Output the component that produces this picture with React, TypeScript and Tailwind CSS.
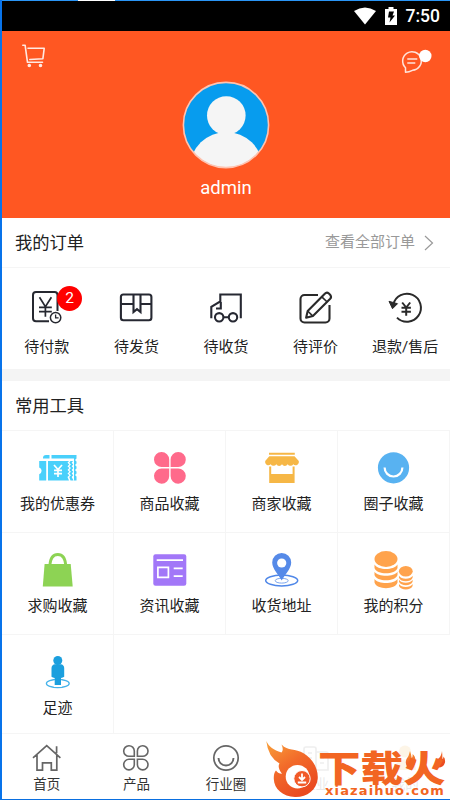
import React from 'react';

const PayIcon = () => (
  <svg viewBox="0 0 40 40" className="w-10 h-10" fill="none" stroke="#262830" strokeWidth="2">
    <path d="M22 34.2H9a3 3 0 0 1-3-3V8a3 3 0 0 1 3-3h18.500a3 3 0 0 1 3 3v16" />
    <path d="M12.500 10.200l5.900 9.500 6-9.500M18.400 19.700v10M12 20.400h12.800M12 24.700h12.800" strokeWidth="1.700" />
    <circle cx="28.600" cy="30.600" r="5.200" strokeWidth="1.500" />
    <path d="M28.600 27.500v3.300h3" strokeWidth="1.300" />
  </svg>
);

const BoxIcon = () => (
  <svg viewBox="0 0 40 40" className="w-10 h-10" fill="none" stroke="#262832" strokeWidth="2.100">
    <rect x="4.900" y="7.500" width="30.500" height="25.800" rx="2.500" />
    <path d="M5 17h12.500M24.500 17h11M17.500 7.500v17.500l3.500-2.800 3.500 2.800V7.500" />
  </svg>
);

const TruckIcon = () => (
  <svg viewBox="0 0 40 40" className="w-10 h-10" fill="none" stroke="#262832" strokeWidth="2.100">
    <path d="M5.300 31.200V19.800l9-5.500V7.500H34.800v23.700M14.800 15v6.500H10M17.500 30.300h5" />
    <circle cx="13.200" cy="30.300" r="4.200" />
    <circle cx="27" cy="30.300" r="4.200" />
  </svg>
);

const EditIcon = () => (
  <svg viewBox="0 0 40 40" className="w-10 h-10" fill="none" stroke="#2a2a2a" strokeWidth="2.100" strokeLinejoin="round">
    <path d="M22 8H8.500a4 4 0 0 0-4 4v19.500a4 4 0 0 0 4 4h21a4 4 0 0 0 4-4V18" />
    <path d="M28.800 6.800L11.700 24l-1.600 6.800 6.800-1.700L34.200 11.800a3 3 0 0 0 .3-3.600l-1.600-1.700a3 3 0 0 0-4.100.3z" />
    <path d="M25.800 9.800l5.400 5.200M11.700 24l5.200 5.100" strokeWidth="1.600" />
  </svg>
);

const RefundIcon = () => (
  <svg viewBox="0 0 40 40" className="w-10 h-10" fill="none" stroke="#2a2a2a" strokeWidth="2">
    <path d="M8.300 17.500A14 14 0 1 1 12 30.600" />
    <path d="M4 14.300l8.500 2.400-5 5z" fill="#2a2a2a" strokeWidth="1" />
    <path d="M17.200 15.500l4 5 4-5M21.200 20.500v8.200M16.500 20.800h9.400M16.500 24.700h9.400" />
  </svg>
);

const CouponIcon = () => (
  <svg viewBox="0 0 44 44" className="w-11 h-11" fill="#49d0fb">
    <path d="M7 12q0-3 3-3h3.500v3.500H7zM15.500 9H40.500v3.500l-1.500 1.500 1.500 1.500v2l-1.500 1.500 1.500 1.500v2l-1.500 1.500 1.500 1.500v2l-1.500 1.500 1.500 1.500v4H38V12.500H15.500z" />
    <path d="M3.200 15h7v19.600h-7v-6.400a3.600 3.600 0 0 0 0-6.800zM12 15h21l-1.500 1.700 1.800 1.800-1.800 1.800 1.800 1.800-1.800 1.800 1.800 1.800-1.800 1.800 1.800 1.800-1.800 1.800 1.500 3.500H12z" />
    <path d="M34.500 15H37l-1.300 1.700 1.500 1.800-1.500 1.800 1.500 1.800-1.500 1.800 1.500 1.800-1.500 1.800 1.500 1.800-1.500 1.800 1.800 3.500h-3l-1.200-3.500 1.600-1.800-1.600-1.800 1.600-1.800-1.600-1.800 1.600-1.800-1.600-1.800 1.600-1.800-1.600-1.800z" />
    <path d="M18 19l4 4.500 4-4.500M22 23.500V31M18 24.300h8M18 27.700h8" fill="none" stroke="#fff" strokeWidth="1.700" />
  </svg>
);

const CloverIcon = () => (
  <svg viewBox="0 0 44 44" className="w-11 h-11" fill="#ff6a8b">
    <path d="M21.200 21.100H14a7.600 7.600 0 1 1 7.200-7.500zM22.600 21.100h7.200a7.600 7.600 0 1 0-7.200-7.500zM21.200 22.500H14a7.600 7.600 0 1 0 7.200 7.500zM22.600 22.500h7.200a7.600 7.600 0 1 1-7.200 7.500z" />
  </svg>
);

const StoreIcon = () => (
  <svg viewBox="0 0 44 44" className="w-11 h-11" fill="#f6b746">
    <path d="M9 6.800h25.800v2H9zM9.300 10.300h25.200l4.300 4.800v1.700a3.200 3.200 0 0 1-5.500 1.500 3.300 3.300 0 0 1-5.600 0 3.300 3.300 0 0 1-5.700 0 3.300 3.300 0 0 1-5.700 0 3.300 3.300 0 0 1-5.600 0 3.200 3.200 0 0 1-5.500-1.500v-1.700z" />
    <path d="M9.200 20.500h2V28h21.400v-7.500h2V37H9.200z" />
  </svg>
);

const CircleIcon = () => (
  <svg viewBox="0 0 44 44" className="w-11 h-11">
    <circle cx="21.500" cy="21.800" r="15.600" fill="#58b2f1" />
    <path d="M12.600 21.500a8.900 9 0 0 0 17.800 0" fill="none" stroke="#fff" strokeWidth="2.200" />
  </svg>
);

const BagIcon = () => (
  <svg viewBox="0 0 44 44" className="w-11 h-11">
    <path d="M13.800 17.500c.5-7 3.500-11 8-11s7.500 4 8 11" fill="none" stroke="#8dd354" strokeWidth="2.800" />
    <path d="M8.600 16h26.100l2 22.500H6.800z" fill="#8dd354" />
  </svg>
);

const NewsIcon = () => (
  <svg viewBox="0 0 44 44" className="w-11 h-11">
    <rect x="5.300" y="6.300" width="33" height="31.500" rx="2.200" fill="#a277f8" />
    <path d="M8.700 12.100h26.300M25.700 20.400h9M25.700 28.200h9M9.900 19.400h10.500v10H9.900z" fill="none" stroke="#fff" strokeWidth="1.700" />
  </svg>
);

const PinIcon = () => (
  <svg viewBox="0 0 44 44" className="w-11 h-11">
    <ellipse cx="21.700" cy="32.500" rx="16" ry="5.400" fill="none" stroke="#4f87e8" strokeWidth="1.500" />
    <ellipse cx="21.700" cy="32.700" rx="6.500" ry="2.400" fill="none" stroke="#7ba6ef" strokeWidth="1" />
    <path d="M21.700 32.500c-2.500-5-9.500-11.500-9.500-18a9.500 9.500 0 0 1 19 0c0 6.500-7 13-9.500 18z" fill="#568ae8" />
    <circle cx="21.700" cy="15" r="4.600" fill="#fff" />
  </svg>
);

const CoinsIcon = () => (
  <svg viewBox="0 0 44 44" className="w-11 h-11" fill="#ffa34c">
    <ellipse cx="14" cy="11" rx="11.500" ry="7.900" />
    <path d="M2.500 16.500c3.500 6 19.500 6 23 0v3.500c-2 7-21 7-23 0zM2.500 23.800c3.500 5.300 19.500 5.300 23 0v3.200c-2 7-21 7-23 0zM2.500 31c3.500 5.300 19.500 5.300 23 0v3.500c-2 7.500-21 7.500-23 0z" />
    <ellipse cx="33.800" cy="23.200" rx="6.900" ry="5.300" />
    <path d="M27 27.700c2 4 11.600 4 13.600 0v2c-1.500 4.700-12 4.700-13.600 0zM27 31.800c2 4 11.600 4 13.600 0v2c-1.500 4.500-12 4.500-13.600 0zM27 36c2 4 11.600 4 13.600 0v2c-1.500 4.500-12 4.500-13.600 0z" />
  </svg>
);

const FootIcon = () => (
  <svg viewBox="0 0 44 44" className="w-11 h-11" fill="#1b9fde">
    <ellipse cx="21.800" cy="33.500" rx="11.400" ry="4" fill="none" stroke="#46b3ea" strokeWidth="1.300" />
    <path d="M17.800 30.500h8v6.500h-8z" fill="#fff" />
    <circle cx="21.800" cy="10.500" r="4.500" />
    <path d="M18.500 14.200h6.700q3 .8 3 4v8.500q-1.200 1-3.200 1.400v7h-6.300v-7q-2-.4-3.200-1.400v-8.500q0-3.200 3-4z" />
  </svg>
);

const HomeIcon = () => (
  <svg viewBox="0 0 32 32" className="w-8 h-8" fill="none" stroke="#666" strokeWidth="1.700">
    <path d="M2 15.800L15.700 3.700l13.700 12.100M25.600 4.300v7M6 13v15.200h5.500v-7.300h8.800v7.300h5.500V13" />
  </svg>
);

const ProductIcon = () => (
  <svg viewBox="0 0 32 32" className="w-8 h-8" fill="none" stroke="#666" strokeWidth="1.600">
    <path d="M14.300 14.300H9.200a5.300 5.300 0 1 1 5.100-5.400zM17.400 14.300h5.100a5.300 5.300 0 1 0-5.100-5.400zM14.300 17.300H9.200a5.300 5.300 0 1 0 5.100 5.400zM17.400 17.300h5.100a5.300 5.300 0 1 1-5.100 5.400z" />
  </svg>
);

const SmileIcon = () => (
  <svg viewBox="0 0 32 32" className="w-8 h-8" fill="none" stroke="#666" strokeWidth="1.700">
    <circle cx="16" cy="16" r="12.200" />
    <path d="M8.500 16a7.500 7.500 0 0 0 15 0" strokeWidth="1.900" />
  </svg>
);

const CompanyIcon = () => (
  <svg viewBox="0 0 32 32" className="w-8 h-8" fill="none" stroke="#666" strokeWidth="1.700">
    <path d="M4 28V7a2 2 0 0 1 2-2h8a2 2 0 0 1 2 2v21zM16 10h10a2 2 0 0 1 2 2v16H16M8 11h4M8 16h4M8 21h4M20 16h4M20 21h4" />
  </svg>
);

const UserIcon = () => (
  <svg viewBox="0 0 32 32" className="w-8 h-8" fill="#f5a623">
    <circle cx="16" cy="9.500" r="6" />
    <path d="M5 28a11 10.500 0 0 1 22 0z" />
  </svg>
);

const orders = [
  { name: '待付款', icon: <PayIcon />, count: 2 },
  { name: '待发货', icon: <BoxIcon /> },
  { name: '待收货', icon: <TruckIcon /> },
  { name: '待评价', icon: <EditIcon /> },
  { name: '退款/售后', icon: <RefundIcon /> },
];

const tools = [
  { name: '我的优惠券', icon: <CouponIcon /> },
  { name: '商品收藏', icon: <CloverIcon /> },
  { name: '商家收藏', icon: <StoreIcon /> },
  { name: '圈子收藏', icon: <CircleIcon /> },
  { name: '求购收藏', icon: <BagIcon /> },
  { name: '资讯收藏', icon: <NewsIcon /> },
  { name: '收货地址', icon: <PinIcon /> },
  { name: '我的积分', icon: <CoinsIcon /> },
  { name: '足迹', icon: <FootIcon /> },
];

const tabs = [
  { name: '首页', icon: <HomeIcon /> },
  { name: '产品', icon: <ProductIcon /> },
  { name: '行业圈', icon: <SmileIcon /> },
  { name: '企业', icon: <CompanyIcon />, faded: true },
  { name: '我的', icon: <UserIcon />, faded: true },
];

const StatusBar = () => (
  <div className="h-[30px] shrink-0 bg-black flex items-center justify-end pr-[10px] text-white">
    <svg viewBox="0 0 22 18" className="w-[22px] h-[18px] mr-[9px]" fill="#fff">
      <path d="M0 4Q11-3 22 4L11 17.500z" />
    </svg>
    <svg viewBox="0 0 12 18" className="w-3 h-[18px] mr-[9px]">
      <path d="M0 2h3.500V0h5v2H12v16H0z" fill="#fff" />
      <path d="M4 4.500h5L7.500 8.500H10L4.500 15.500l1-5H3z" fill="#000" />
    </svg>
    <span className="text-[17.500px] leading-[30px] font-medium">7:50</span>
  </div>
);

const Profile = () => (
  <div className="h-[187px] shrink-0 bg-[#ff5722] relative flex flex-col items-center pt-[50px]">
    <svg viewBox="0 0 24 24" className="absolute left-5 top-[13px] w-6 h-6" fill="none" stroke="#ffe9e2" strokeWidth="1.600" strokeLinejoin="round" strokeLinecap="round">
      <path d="M.8 1.200h2.300L5.500 18.300h15M6 4.300h16.200l-1.300 10.400L7.800 15.500" />
      <circle cx="7.300" cy="21.500" r="1" fill="#fff" />
      <circle cx="18.500" cy="21.500" r="1" fill="#fff" />
    </svg>
    <svg viewBox="0 0 32 26" className="absolute left-[399px] top-[17px] w-8 h-[26px]" fill="none" stroke="#ffe4db" strokeWidth="1.500">
      <path d="M4.500 19.700A9.300 9.300 0 1 1 11.500 22.300Q8 24 4.500 24.300z" strokeLinejoin="round" />
      <path d="M6.300 11h10M6.300 15h8" />
      <circle cx="24.300" cy="8" r="6.200" fill="#fff" stroke="none" />
    </svg>
    <svg viewBox="0 0 88 88" className="w-[88px] h-[88px]">
      <defs>
        <clipPath id="avatar"><circle cx="44" cy="44" r="42.500" /></clipPath>
      </defs>
      <g clipPath="url(#avatar)">
        <rect width="88" height="88" fill="#079cee" />
        <circle cx="44.300" cy="34.500" r="19.300" fill="#f5f5f5" />
        <ellipse cx="44.300" cy="86" rx="36" ry="35" fill="#f5f5f5" />
      </g>
      <circle cx="44" cy="44" r="42.600" fill="none" stroke="#ffc3b0" strokeWidth="1.600" />
    </svg>
    <div className="mt-[7px] text-[18.500px] leading-6 text-white">admin</div>
  </div>
);

const Watermark = () => (
  <div className="absolute left-[264px] top-[738px] w-[186px] h-[61px] text-[#f26522]">
    <svg viewBox="0 0 186 61" className="absolute inset-0 w-full h-full">
      <defs>
        <linearGradient id="flame" x1="0" y1="0" x2="0.6" y2="1">
          <stop offset="0" stopColor="#f9a13a" />
          <stop offset="0.5" stopColor="#f26a2a" />
          <stop offset="1" stopColor="#ea4a20" />
        </linearGradient>
      </defs>
      <path d="M2.300 3C5 9 9.500 12 17.500 14.500Q20 12 17.500 6.500C24 13.500 31 10 40 15.500C49 21 54.500 31 53.700 41C52.500 52 43 59.300 31 59C19 58.500 10 51 9.800 41Q9.500 35 12 32.500Q14.500 36 18 35.800Q13 29 15.500 25.500Q4 19 2.300 3z" fill="url(#flame)" />
      <circle cx="33.500" cy="38.700" r="11.800" fill="#fff" />
      <circle cx="38" cy="40.700" r="8.200" fill="#f15a29" stroke="#fff" strokeWidth="1" />
      <path d="M38 35.500v6M35 39l3 3 3-3M33.800 44.500h8.400" fill="none" stroke="#fff" strokeWidth="1.800" />
      {/* small flames beside the last character */}
      <path d="M146 13q-1 5-3.500 8q-2 5 1.500 9q7-1 7.500-7q0-5-3-7q.5 3-.8 4q-.5-4-1.700-7zM178 13q-.5 5-4 8q-3 4-.5 8.500q6 .5 7.500-5q.5-4-1.500-6q0 2-1.200 2.500q.2-4-.3-8z" fill="url(#flame)" />
    </svg>
    <div className="absolute left-[54px] top-[9px] flex text-[42.500px] leading-[40px] font-black font-['Noto_Sans_CJK_SC',sans-serif] origin-center scale-y-[0.86]">
      下载火
    </div>
    <div className="absolute left-[61px] top-[46px] text-[13px] leading-[14px] font-bold tracking-[1.150px] font-['DejaVu_Sans',sans-serif]">
      xiazaihuo.com
    </div>
  </div>
);

export default function App() {
  return (
    <div className="relative w-[450px] h-[800px] overflow-hidden flex flex-col bg-white border-l-2 border-l-[#0873ea] border-b border-b-[#0a6fe0] text-[#222] font-['Roboto','Noto_Sans_CJK_SC',sans-serif]">
      <div className="h-px shrink-0 bg-[#2a95f5] flex">
        <div className="ml-[76px] w-[37px] bg-white"></div>
      </div>
      <StatusBar />
      <Profile />

      {/* Orders */}
      <div className="h-[50px] shrink-0 flex items-center justify-between pl-[13px] pr-4 border-b border-[#f5f5f5]">
        <span className="text-[17.300px] leading-6">我的订单</span>
        <span className="flex items-center text-[15px] text-[#999]">
          查看全部订单
          <svg viewBox="0 0 10 16" className="w-[10px] h-4 ml-[9px]" fill="none" stroke="#999" strokeWidth="1.200">
            <path d="M1 1l7.500 7L1 15" />
          </svg>
        </span>
      </div>
      <div className="h-[101px] shrink-0 grid grid-cols-5 pt-[19px]">
        {orders.map((item) => (
          <div key={item.name} className="relative flex flex-col items-center">
            {item.icon}
            <span className="mt-[10px] text-[15px] leading-5 whitespace-nowrap">{item.name}</span>
            {item.count && (
              <span className="absolute left-[55px] top-[-1px] w-[25px] h-[25px] rounded-full bg-[#ff0000] text-white text-[15.500px] leading-[25px] text-center">
                {item.count}
              </span>
            )}
          </div>
        ))}
      </div>
      <div className="h-3 shrink-0 bg-[#f4f4f4]"></div>

      {/* Tools */}
      <div className="h-[50px] shrink-0 flex items-center pl-[13px] border-b border-[#f5f5f5]">
        <span className="text-[17.300px] leading-6">常用工具</span>
      </div>
      <div className="h-[303px] shrink-0 grid grid-cols-4 grid-rows-[102px_102px_99px]">
        {tools.map((item) => (
          <div key={item.name} className="flex flex-col items-center pt-[15px] border-r border-b border-[#f5f5f5]">
            {item.icon}
            <span className="mt-1 text-[15px] leading-5">{item.name}</span>
          </div>
        ))}
        <div className="col-span-3 border-b border-[#f5f5f5]"></div>
      </div>

      {/* Tab bar */}
      <div className="flex-1 grid grid-cols-5 pt-[8px] text-[#333]">
        {tabs.map((item) => (
          <div key={item.name} className={item.faded ? 'flex flex-col items-center opacity-10' : 'flex flex-col items-center'}>
            {item.icon}
            <span className="text-[13.500px] leading-5">{item.name}</span>
          </div>
        ))}
      </div>
      <div className="absolute left-[-2px] top-0 w-full">
        <Watermark />
      </div>
    </div>
  );
}
